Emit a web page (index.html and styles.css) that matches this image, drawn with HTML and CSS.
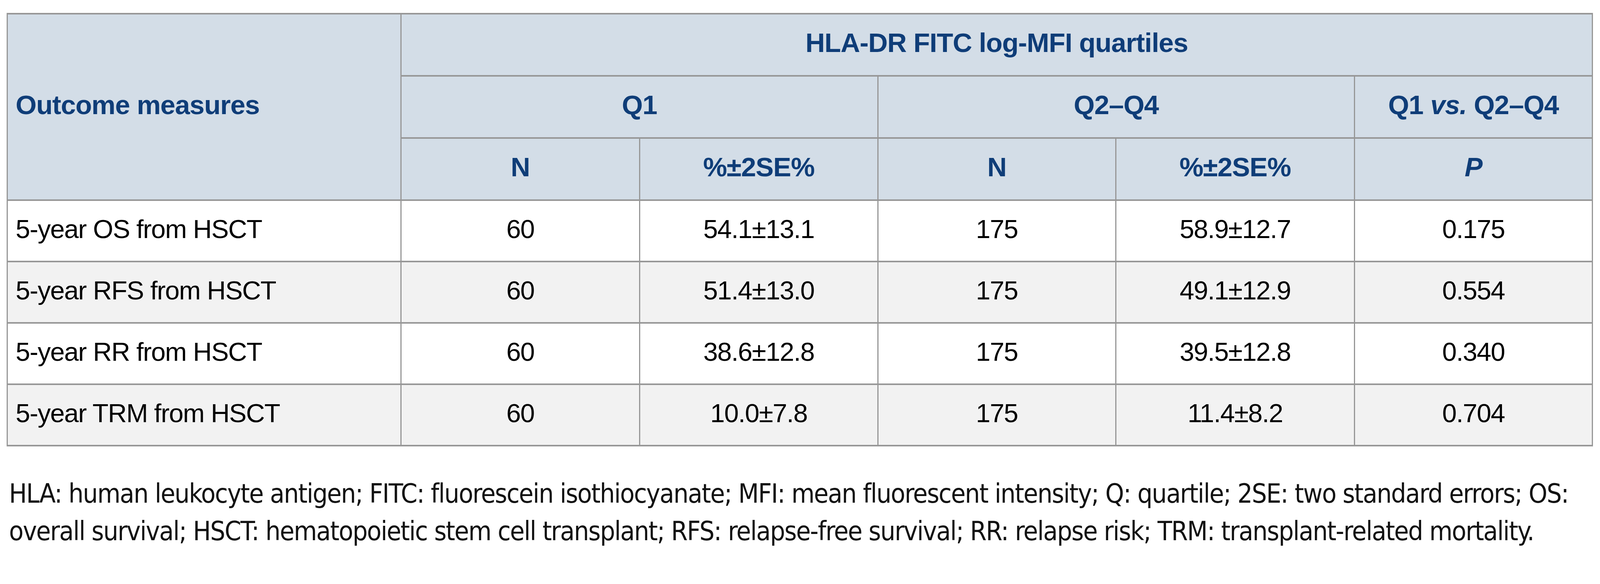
FILE: index.html
```html
<!DOCTYPE html>
<html lang="en">
<head>
<meta charset="utf-8">
<title>HLA-DR FITC log-MFI quartiles</title>
<link rel="stylesheet" href="styles.css">
</head>
<body>
<div class="page">
  <table class="data">
    <colgroup>
      <col class="c-label">
      <col class="c-n1">
      <col class="c-p1">
      <col class="c-n2">
      <col class="c-p2">
      <col class="c-p">
    </colgroup>
    <thead>
      <tr>
        <th rowspan="3" class="left">Outcome measures</th>
        <th colspan="5">HLA-DR FITC log-MFI quartiles</th>
      </tr>
      <tr>
        <th colspan="2">Q1</th>
        <th colspan="2">Q2–Q4</th>
        <th>Q1 <em>vs.</em> Q2–Q4</th>
      </tr>
      <tr>
        <th>N</th>
        <th>%±2SE%</th>
        <th>N</th>
        <th>%±2SE%</th>
        <th><em>P</em></th>
      </tr>
    </thead>
    <tbody>
      <tr>
        <td class="left">5-year OS from HSCT</td>
        <td>60</td><td>54.1±13.1</td><td>175</td><td>58.9±12.7</td><td>0.175</td>
      </tr>
      <tr class="alt">
        <td class="left">5-year RFS from HSCT</td>
        <td>60</td><td>51.4±13.0</td><td>175</td><td>49.1±12.9</td><td>0.554</td>
      </tr>
      <tr>
        <td class="left">5-year RR from HSCT</td>
        <td>60</td><td>38.6±12.8</td><td>175</td><td>39.5±12.8</td><td>0.340</td>
      </tr>
      <tr class="alt">
        <td class="left">5-year TRM from HSCT</td>
        <td>60</td><td>10.0±7.8</td><td>175</td><td>11.4±8.2</td><td>0.704</td>
      </tr>
    </tbody>
  </table>
  <p class="note">HLA: human leukocyte antigen; FITC: fluorescein isothiocyanate; MFI: mean fluorescent intensity; Q: quartile; 2SE: two standard errors; OS: overall survival; HSCT: hematopoietic stem cell transplant; RFS: relapse-free survival; RR: relapse risk; TRM: transplant-related mortality.</p>
</div>
</body>
</html>
```
FILE: styles.css
```css
html, body {
  margin: 0;
  padding: 0;
  background: #ffffff;
}

.page {
  padding: 33px 0 0 17px;
  width: 4058px;
}

.data {
  border-collapse: collapse;
  table-layout: fixed;
  width: 4058px;
  font-family: "Liberation Sans", Arial, sans-serif;
}

.c-label { width: 1008px; }
.c-n1 { width: 611px; }
.c-p1 { width: 610px; }
.c-n2 { width: 609px; }
.c-p2 { width: 611px; }
.c-p { width: 609px; }

.data th,
.data td {
  border-style: solid;
  border-color: #979797;
  border-width: 4px 3px;
  text-align: center;
  vertical-align: middle;
  padding: 0 20px 10px;
  line-height: 1.15;
}

.data th {
  height: 145px;
  background: #d3dde7;
  color: #0f3d78;
  font-size: 69px;
  font-weight: bold;
  letter-spacing: -1px;
}

.data th em {
  font-style: italic;
}

.data td {
  height: 143px;
  font-size: 67px;
  letter-spacing: -1.5px;
  color: #000000;
}

.data .left {
  text-align: left;
}

.data tr.alt td {
  background: #f2f2f2;
}

.note {
  margin: 73px 0 0 6px;
  font-family: "DejaVu Sans Condensed", "DejaVu Sans", sans-serif;
  font-size: 68px;
  line-height: 95.5px;
  letter-spacing: -2px;
  color: #111111;
}
```
